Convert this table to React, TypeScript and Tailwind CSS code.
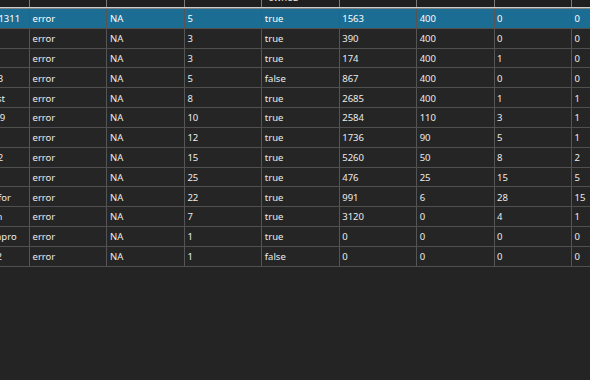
import React from 'react';

type Row = string[];

const rows: Row[] = [
    ['best_run_1311', 'error', 'NA', '5', 'true', '1563', '400', '0', '0', '0'],
    ['alpha', 'error', 'NA', '3', 'true', '390', '400', '0', '0', '0'],
    ['beta', 'error', 'NA', '3', 'true', '174', '400', '1', '0', '0'],
    ['deadline_3', 'error', 'NA', '5', 'false', '867', '400', '0', '0', '0'],
    ['access_test', 'error', 'NA', '8', 'true', '2685', '400', '1', '1', '0'],
    ['pipeline_v9', 'error', 'NA', '10', 'true', '2584', '110', '3', '1', '0'],
    ['gamma', 'error', 'NA', '12', 'true', '1736', '90', '5', '1', '0'],
    ['deadline_2', 'error', 'NA', '15', 'true', '5260', '50', '8', '2', '0'],
    ['delta', 'error', 'NA', '25', 'true', '476', '25', '15', '5', '0'],
    ['requests_for', 'error', 'NA', '22', 'true', '991', '6', '28', '15', '0'],
    ['regression', 'error', 'NA', '7', 'true', '3120', '0', '4', '1', '0'],
    ['releases_apro', 'error', 'NA', '1', 'true', '0', '0', '0', '0', '0'],
    ['baseline_2', 'error', 'NA', '1', 'false', '0', '0', '0', '0', '0'],
];

const headers = ['name', 'status', 'reason', 'runs', 'owned', 'events', 'limit', 'failed', 'warn', 'skip'];

const App: React.FC = () => {
    return (
        <div className="w-[590px] h-[380px] overflow-hidden bg-[#242424] font-['Noto_Sans',sans-serif] text-[9.5px] text-[#ececec]">
            <div className="ml-[-47.4px] w-[800px]">
                {/* header, scrolled so only its lower edge shows */}
                <div className="grid grid-cols-[repeat(10,77.43px)] h-[7px] bg-[#1f1f1f] overflow-hidden">
                    {headers.map((h, i) => (
                        <div key={i} className="border-r border-[#7a7a7a] pl-[6px] pb-[5px] flex items-end leading-none whitespace-nowrap overflow-hidden">
                            {i === 4 ? h : ''}
                        </div>
                    ))}
                </div>
                <div className="h-px bg-[#cdcdcd]" />
                <div className="h-px bg-[#808080]" />

                {rows.map((row, r) => (
                    <div
                        key={r}
                        className={`grid grid-cols-[repeat(10,77.43px)] h-[19.82px] border-b border-[#505050] ${r === 0 ? 'bg-[#1b6d94] text-white' : 'bg-[#252525]'}`}
                    >
                        {row.map((cell, c) => (
                            <div key={c} className="border-r border-[#555555] pl-[2.5px] pt-[2px] flex items-center whitespace-nowrap overflow-hidden">
                                {cell}
                            </div>
                        ))}
                    </div>
                ))}
            </div>
        </div>
    );
};

export default App;
